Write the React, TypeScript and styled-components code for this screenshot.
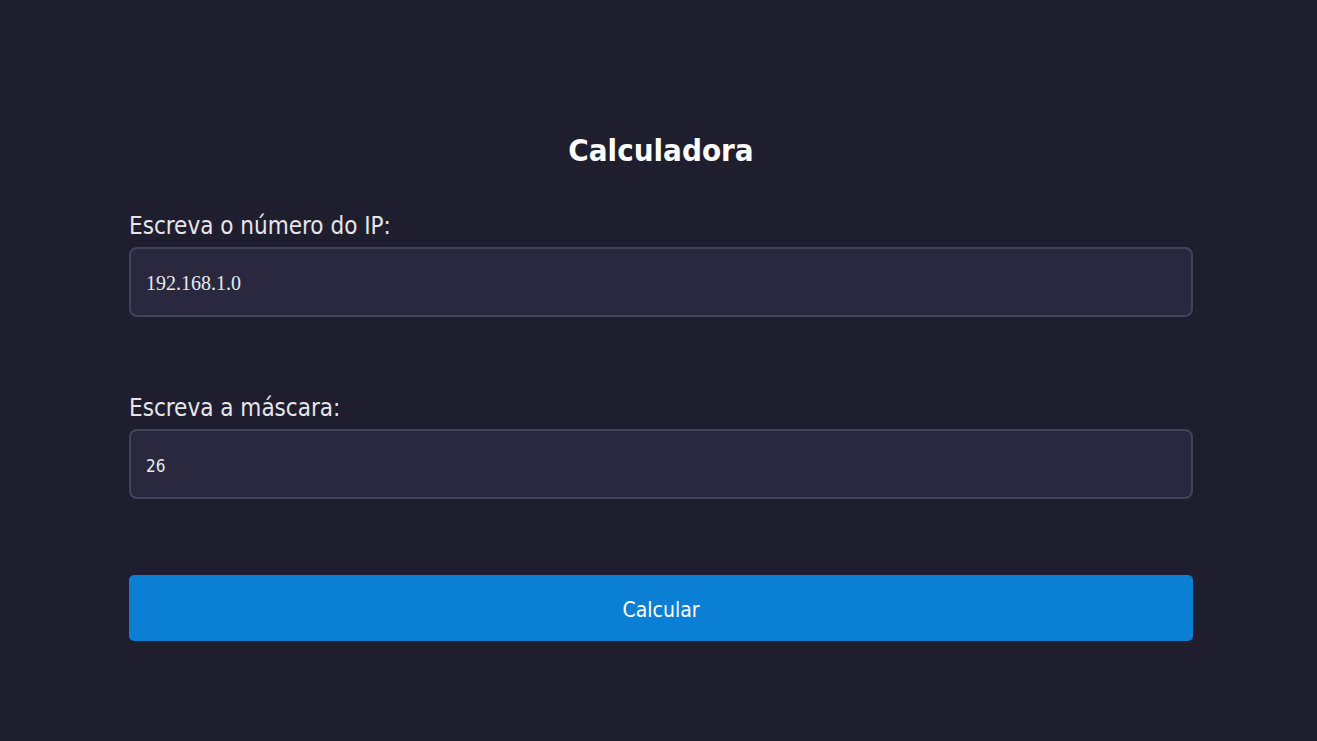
import { ChangeEvent, useState } from "react";
import styled, { createGlobalStyle } from "styled-components";

const GlobalStyle = createGlobalStyle`
  html, body {
    margin: 0;
    padding: 0;
    background: #1f1e2f;
  }
  * {
    box-sizing: border-box;
  }
`;

const App = () => {
  const [ip, setIp] = useState("192.168.1.0");
  const [mask, setMask] = useState("26");

  return (
    <>
      <GlobalStyle />
      <Page>
        <Form onSubmit={(e) => e.preventDefault()}>
          <Title>Calculadora</Title>
          <Field>
            <Label htmlFor="ip">Escreva o número do IP:</Label>
            <Input
              id="ip"
              value={ip}
              onChange={(e: ChangeEvent<HTMLInputElement>) => setIp(e.target.value)}
            />
          </Field>
          <Field>
            <Label htmlFor="mask">Escreva a máscara:</Label>
            <Input
              id="mask"
              sans
              autoFocus
              value={mask}
              onChange={(e: ChangeEvent<HTMLInputElement>) => setMask(e.target.value)}
            />
          </Field>
          <Button type="submit">Calcular</Button>
        </Form>
      </Page>
    </>
  );
};

export default App;

const Page = styled.div`
  min-height: 741px;
  background: #1f1e2f;
  padding: 130px 124px 0 129px;
  font-family: "DejaVu Sans Condensed", "Noto Sans", sans-serif;
  color: #f2f2f2;
`;

const Form = styled.form`
  display: flex;
  flex-direction: column;
`;

const Title = styled.h1`
  margin: 0 0 41px;
  font-size: 31px;
  line-height: 40px;
  font-weight: 700;
  text-align: center;
  color: #ffffff;
`;

const Field = styled.div`
  display: flex;
  flex-direction: column;
  gap: 6px;
  margin-bottom: 76px;

  & + & {
    margin-bottom: 75px;
  }
`;

const Label = styled.label`
  font-size: 24px;
  line-height: 30px;
  color: #e6e6ea;
`;

const Input = styled.input<{ sans?: boolean }>`
  height: 70px;
  flex-shrink: 0;
  width: 100%;
  padding: 3px 15px 0;
  background: #29283e;
  border: 2px solid #43425a;
  border-radius: 8px;
  color: #e8e8ee;
  caret-color: #e8e8ee;
  font-family: ${({ sans }) =>
    sans ? `"DejaVu Sans Condensed", "Noto Sans", sans-serif` : `"Liberation Serif", serif`};
  font-size: ${({ sans }) => (sans ? "17px" : "20px")};
  outline: none;
`;

const Button = styled.button`
  height: 66px;
  flex-shrink: 0;
  width: 100%;
  margin-top: 1px;
  padding-top: 4px;
  border: none;
  border-radius: 5px;
  background: #0b7fd3;
  color: #ffffff;
  font-family: "DejaVu Sans Condensed", "Noto Sans", sans-serif;
  font-size: 21px;
  cursor: pointer;
`;
